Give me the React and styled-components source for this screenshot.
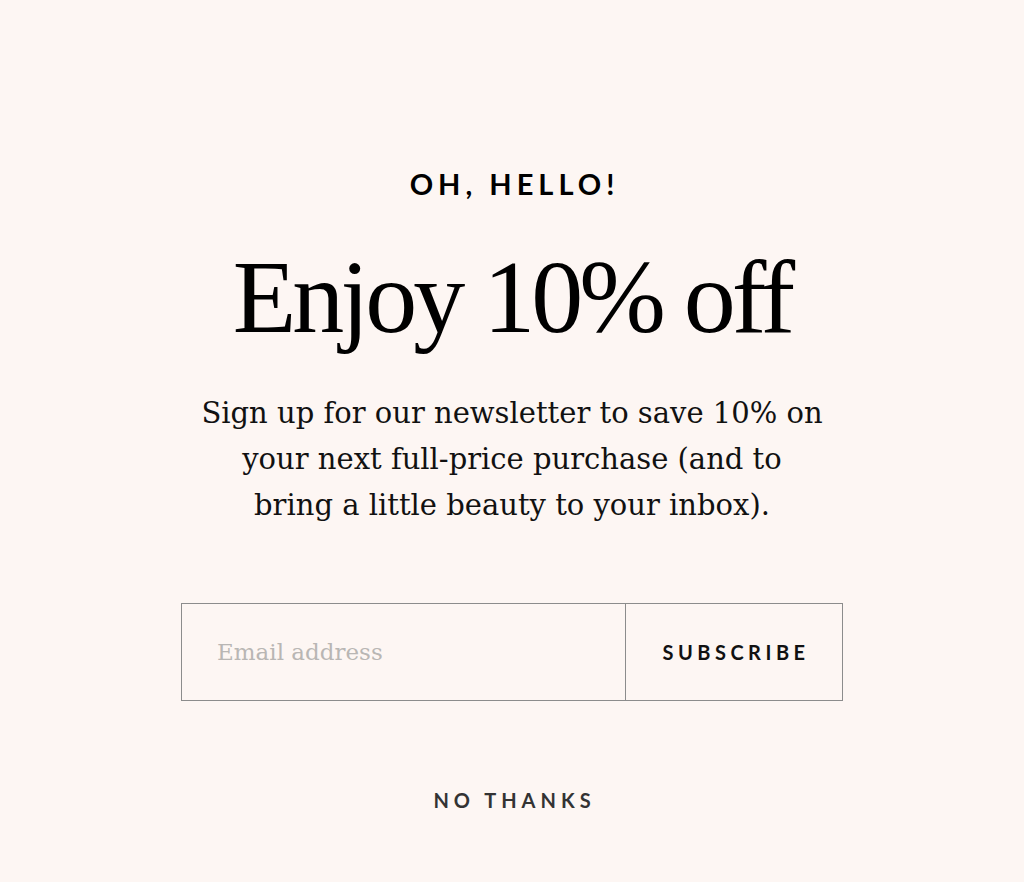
import styled, { createGlobalStyle } from "styled-components";

const GlobalStyle = createGlobalStyle`
  html, body {
    margin: 0;
    padding: 0;
    background: #fdf6f3;
  }
  * {
    box-sizing: border-box;
  }
`;

export default function App() {
  return (
    <Page>
      <GlobalStyle />
      <Modal>
        <Eyebrow>OH, HELLO!</Eyebrow>
        <Title>Enjoy 10% off</Title>
        <Lead>
          Sign up for our newsletter to save 10% on
          <br />
          your next full-price purchase (and to
          <br />
          bring a little beauty to your inbox).
        </Lead>
        <Form onSubmit={(e) => e.preventDefault()}>
          <EmailInput type="email" placeholder="Email address" />
          <SubscribeButton type="submit">SUBSCRIBE</SubscribeButton>
        </Form>
        <DismissButton type="button">NO THANKS</DismissButton>
      </Modal>
    </Page>
  );
}

const Page = styled.div`
  min-height: 882px;
  width: 1024px;
  background: #fdf6f3;
  display: flex;
  justify-content: center;
`;

const Modal = styled.div`
  display: flex;
  flex-direction: column;
  align-items: center;
  padding-top: 166px;
`;

const Eyebrow = styled.h3`
  margin: 0;
  font-family: "Lato", "Inter", sans-serif;
  font-weight: 700;
  font-size: 29px;
  line-height: 36px;
  letter-spacing: 5px;
  padding-left: 5px;
  color: #000;
  -webkit-text-stroke: 0;
`;

const Title = styled.h1`
  margin: 40px 0 0;
  font-family: "Liberation Serif", "Times New Roman", serif;
  font-weight: 400;
  font-size: 104px;
  line-height: 110px;
  letter-spacing: -4px;
  color: #000;
`;

const Lead = styled.p`
  margin: 38px 0 0;
  font-family: "DejaVu Serif", Georgia, serif;
  font-size: 29px;
  line-height: 46px;
  text-align: center;
  color: #111;
`;

const Form = styled.form`
  margin-top: 75px;
  width: 662px;
  height: 98px;
  display: flex;
  border: 1px solid #8c8c8c;
`;

const EmailInput = styled.input`
  flex: 1;
  min-width: 0;
  border: none;
  outline: none;
  background: transparent;
  padding: 0 35px;
  font-family: "DejaVu Serif", Georgia, serif;
  font-size: 23px;
  color: #111;

  &::placeholder {
    color: #b9b6b4;
  }
`;

const SubscribeButton = styled.button`
  width: 217px;
  border: none;
  border-left: 1px solid #8c8c8c;
  background: transparent;
  font-family: "Lato", "Inter", sans-serif;
  font-weight: 700;
  font-size: 20px;
  letter-spacing: 4.5px;
  color: #111;
  cursor: pointer;
  padding: 0 0 0 4px;
`;

const DismissButton = styled.button`
  margin-top: 87px;
  border: none;
  background: transparent;
  font-family: "Lato", "Inter", sans-serif;
  font-weight: 700;
  font-size: 20px;
  letter-spacing: 5px;
  color: #333;
  cursor: pointer;
  padding: 0 0 0 5px;
`;
